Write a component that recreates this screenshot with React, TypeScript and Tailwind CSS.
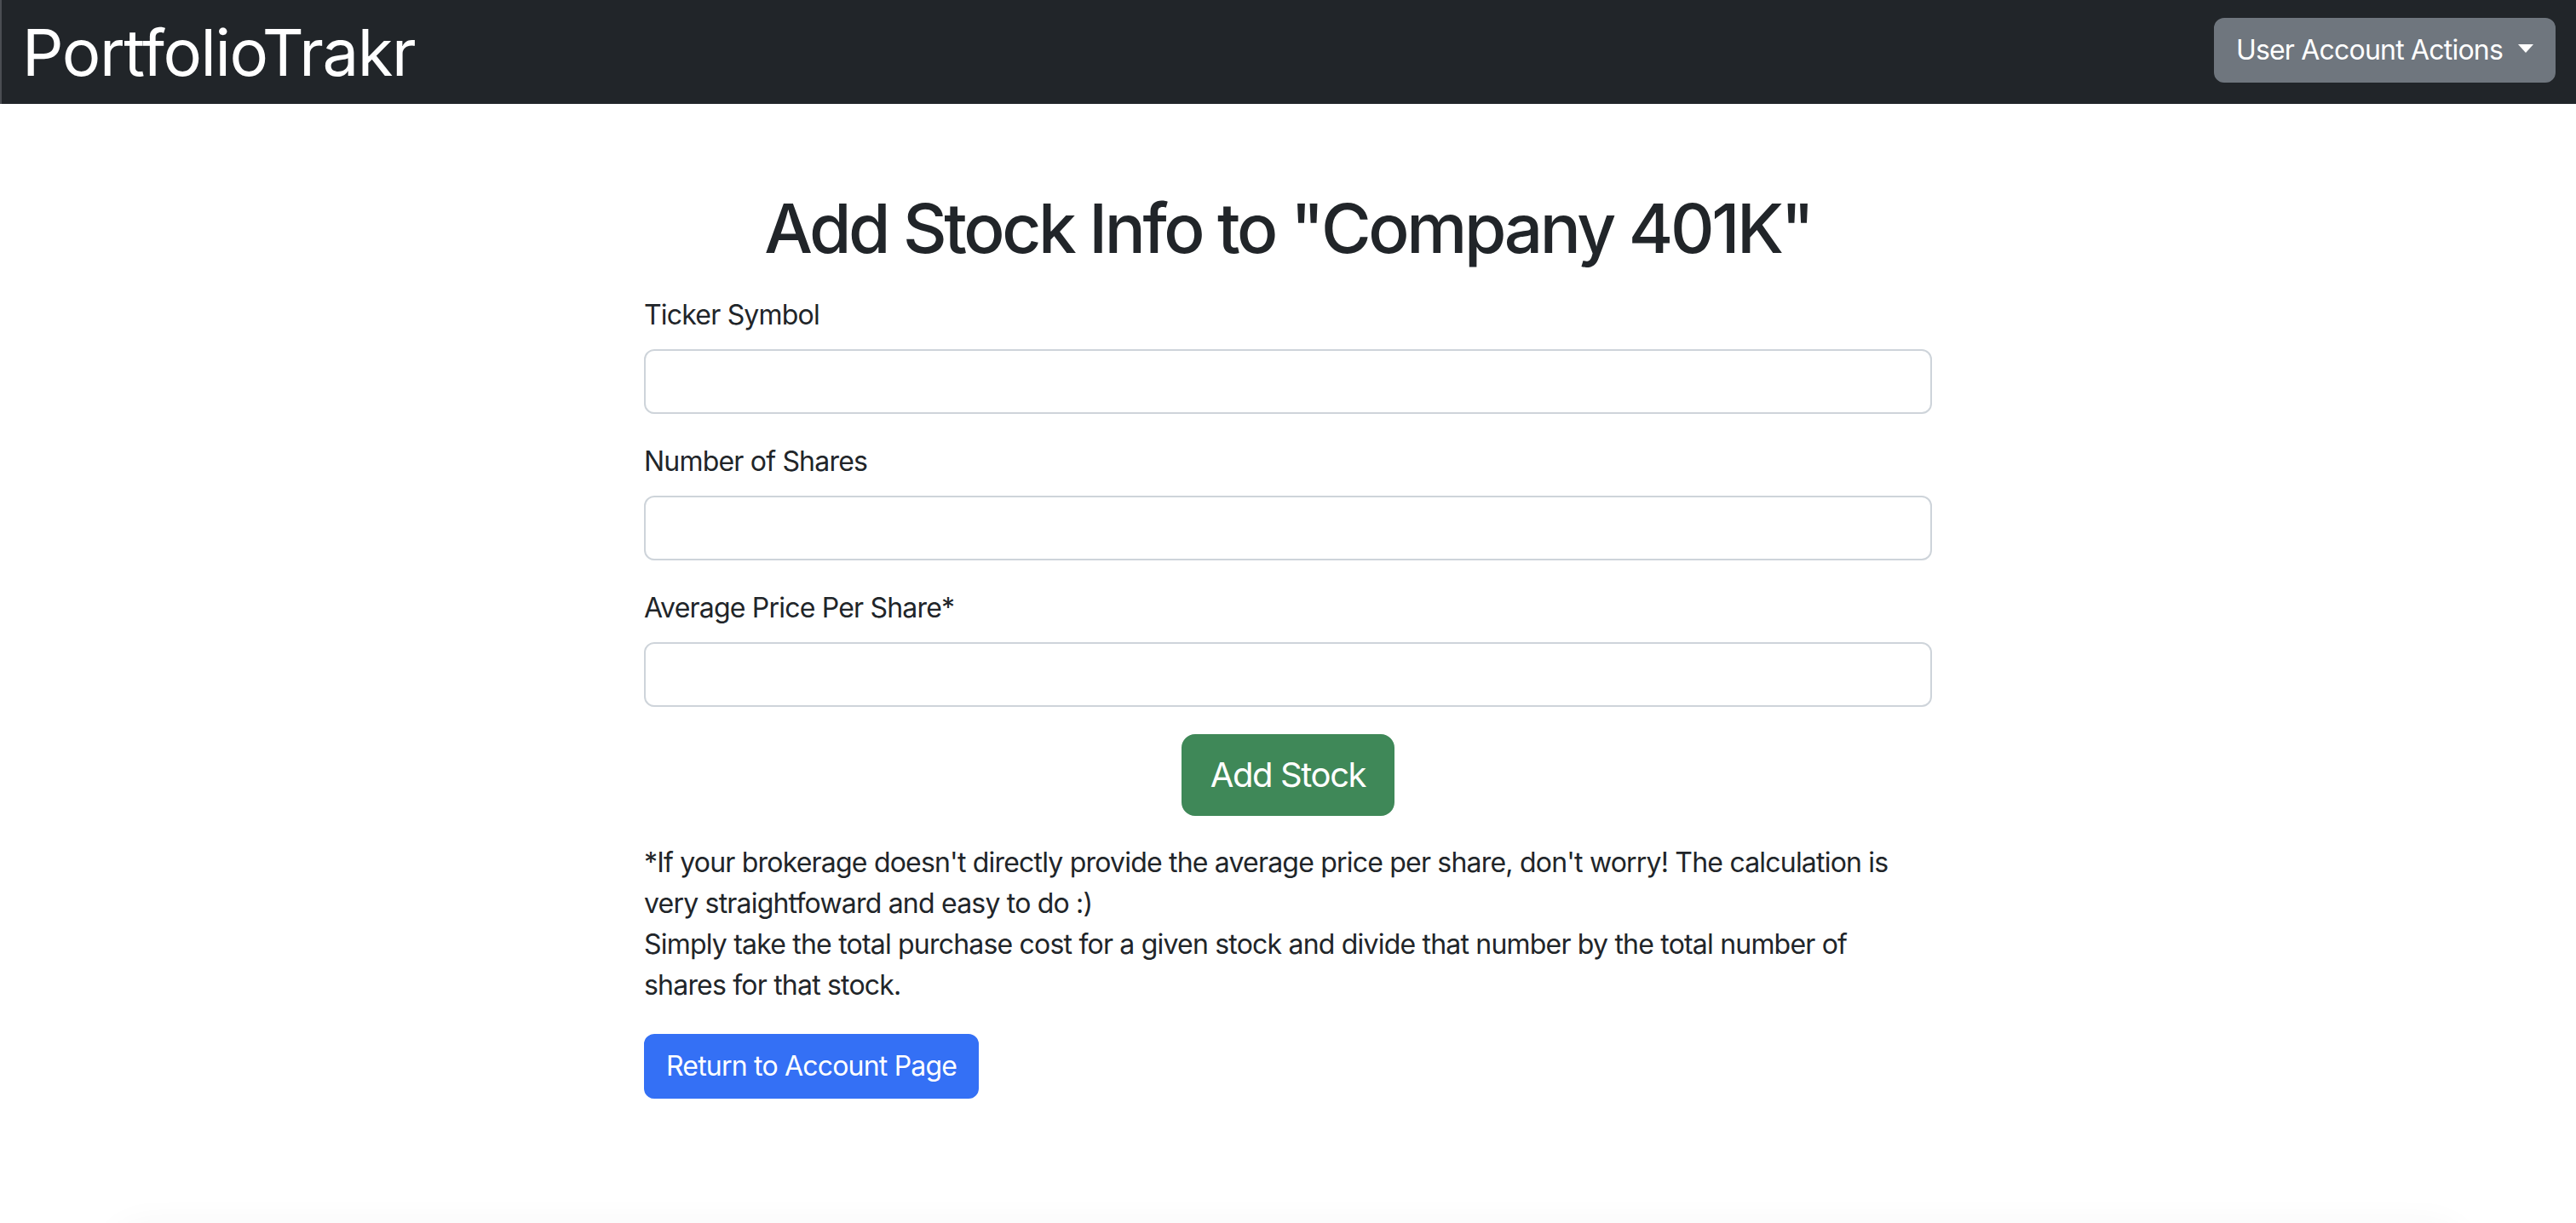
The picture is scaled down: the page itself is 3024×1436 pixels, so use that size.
import React from 'react';

const fieldLabels = ['Ticker Symbol', 'Number of Shares', 'Average Price Per Share*'];

const App: React.FC = () => {
  return (
    <div className="min-h-screen bg-white text-[#212529] font-['Inter','Liberation_Sans',sans-serif] tracking-[-0.8px] overflow-hidden">
      {/* Navbar */}
      <nav className="h-[122px] bg-[#212529] flex items-center justify-between px-[24px] border-l-2 border-[#4a4d52]">
        <span className="text-white text-[76px] leading-[96px] tracking-[-1.4px]">PortfolioTrakr</span>
        <button className="flex items-center h-[76px] px-[24px] border-2 border-[#6f767e] bg-[#6f767e] rounded-[12px] text-white text-[32px] leading-[48px] -mt-[4px]">
          User Account Actions
          <span className="ml-[18px] mt-[-4px] w-0 h-0 border-t-[10px] border-t-white border-x-[9px] border-x-transparent" />
        </button>
      </nav>

      {/* Main form */}
      <main className="w-[1512px] mx-auto pt-[98px]">
        <h1 className="text-center text-[80px] leading-[96px] font-medium tracking-[-3.4px] mb-[30px]">
          Add Stock Info to "Company 401K"
        </h1>

        <form>
          {fieldLabels.map((label) => (
            <div key={label} className="mb-[32px]">
              <label className="block text-[32px] leading-[48px] mb-[16px]">{label}</label>
              <input
                type="text"
                className="block w-full h-[76px] px-[24px] border-2 border-[#ced4da] rounded-[12px] text-[32px] outline-none"
              />
            </div>
          ))}
          <div className="flex justify-center">
            <button
              type="button"
              className="h-[96px] px-[32px] border-2 border-[#3f8858] bg-[#3f8858] rounded-[16px] text-white text-[40px] leading-[60px] tracking-[-1.4px]"
            >
              Add Stock
            </button>
          </div>
        </form>

        <p className="mt-[31px] text-[32px] leading-[48px]">
          *If your brokerage doesn't directly provide the average price per share, don't worry! The calculation is very straightfoward and easy to do :)
          <br />
          Simply take the total purchase cost for a given stock and divide that number by the total number of shares for that stock.
        </p>

        <button className="mt-[33px] h-[76px] px-[24px] border-2 border-[#3470f5] bg-[#3470f5] rounded-[12px] text-white text-[32px] leading-[48px]">
          Return to Account Page
        </button>
      </main>

      {/* Faint card shadow peeking at the bottom */}
      <div className="mt-[147px] mx-[130px] h-[200px] rounded-[40px] shadow-[0_0_40px_rgba(0,0,0,0.04)]" />
    </div>
  );
};

export default App;
